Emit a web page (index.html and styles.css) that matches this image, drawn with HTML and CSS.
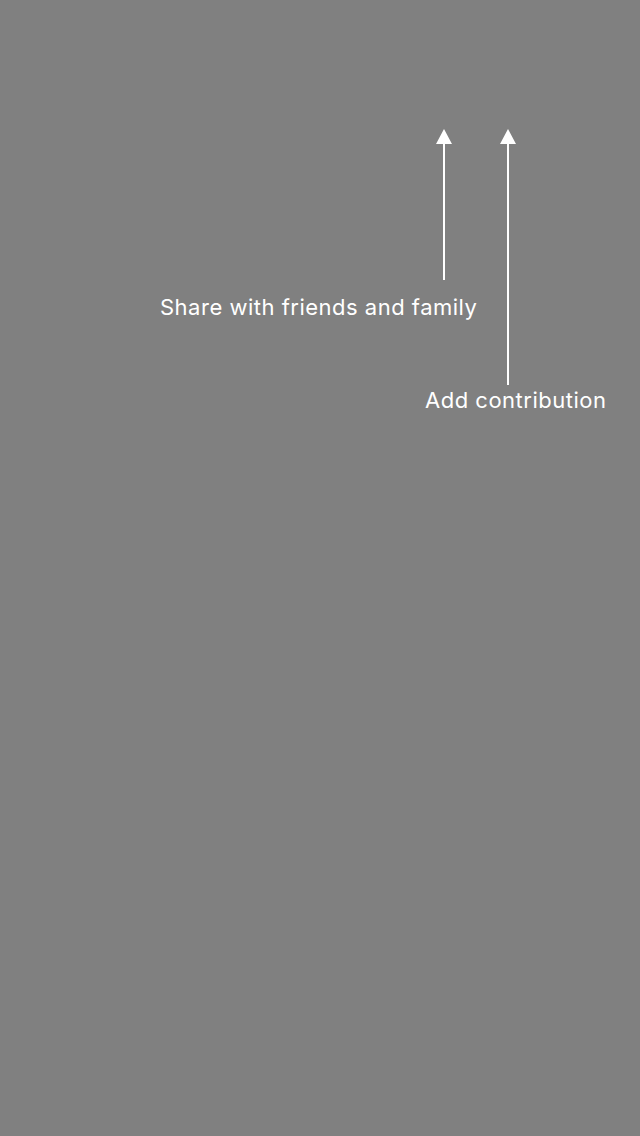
FILE: index.html
```html
<!DOCTYPE html>
<html>
<head>
<meta charset="utf-8">
<link rel="stylesheet" href="styles.css">
</head>
<body>
<div class="overlay">
  <svg class="arrow arrow-share" width="16" height="151" viewBox="0 0 16 151">
    <polygon points="8,0 16,15 0,15" fill="#fff"/>
    <rect x="7" y="14" width="2" height="137" fill="#fff"/>
  </svg>
  <div class="label label-share">Share with friends and family</div>
  <svg class="arrow arrow-add" width="16" height="256" viewBox="0 0 16 256">
    <polygon points="8,0 16,15 0,15" fill="#fff"/>
    <rect x="7" y="14" width="2" height="242" fill="#fff"/>
  </svg>
  <div class="label label-add">Add contribution</div>
</div>
</body>
</html>
```
FILE: styles.css
```css
html, body {
  margin: 0;
  padding: 0;
  width: 640px;
  height: 1136px;
  background: #808080;
  overflow: hidden;
}
.overlay {
  position: relative;
  width: 640px;
  height: 1136px;
  font-family: Inter, "Noto Sans", sans-serif;
  color: #fff;
}
.arrow {
  position: absolute;
  display: block;
}
.arrow-share {
  left: 436px;
  top: 129px;
}
.arrow-add {
  left: 500px;
  top: 129px;
}
.label {
  position: absolute;
  font-size: 22px;
  line-height: 26px;
  letter-spacing: 0.5px;
  white-space: nowrap;
}
.label-share {
  left: 160px;
  top: 294px;
}
.label-add {
  left: 425px;
  top: 387px;
}
```
